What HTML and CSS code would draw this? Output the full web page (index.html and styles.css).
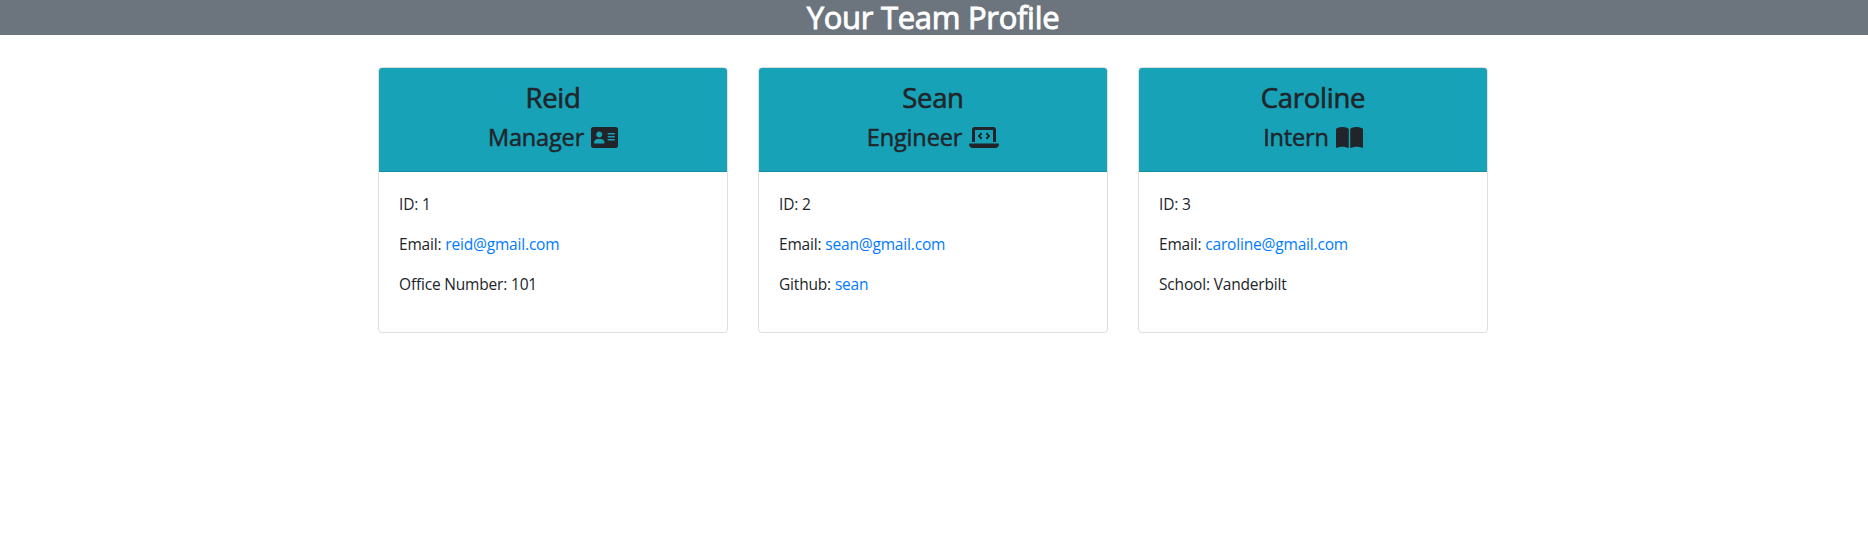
FILE: index.html
```html
<!DOCTYPE html>
<html lang="en">
<head>
<meta charset="utf-8">
<title>Your Team Profile</title>
<link rel="stylesheet" href="styles.css">
</head>
<body>
<header class="banner"><h1 class="banner-title">Your Team Profile</h1></header>
<main class="team">
  <section class="card">
    <div class="card-header">
      <h3 class="name name-short">Reid</h3>
      <h4 class="role"><span>Manager</span>
        <svg class="icon" viewBox="0 32 576 448"><path fill-rule="evenodd" d="M528 32H48C21.500 32 0 53.500 0 80v352c0 26.500 21.500 48 48 48h480c26.500 0 48-21.500 48-48V80c0-26.500-21.500-48-48-48zM176 128c35.350 0 64 28.650 64 64s-28.650 64-64 64s-64-28.650-64-64S140.700 128 176 128zM272 384h-192C71.160 384 64 376.800 64 368C64 323.800 99.820 288 144 288h64c44.180 0 80 35.820 80 80C288 376.800 280.800 384 272 384zM496 320h-128a16 16 0 0 1 0-32h128a16 16 0 0 1 0 32zM496 256h-128a16 16 0 0 1 0-32h128a16 16 0 0 1 0 32zM496 192h-128a16 16 0 0 1 0-32h128a16 16 0 0 1 0 32z"/></svg>
      </h4>
    </div>
    <div class="card-body">
      <p>ID: 1</p>
      <p>Email: <a href="mailto:reid@gmail.com">reid@gmail.com</a></p>
      <p>Office Number: 101</p>
    </div>
  </section>
  <section class="card">
    <div class="card-header">
      <h3 class="name name-short">Sean</h3>
      <h4 class="role"><span>Engineer</span>
        <svg class="icon icon-wide" viewBox="0 32 640 448"><path d="M128 96h384v256h64V80c0-26.400-21.600-48-48-48H112c-26.400 0-48 21.600-48 48v272h64V96zM624 384H16c-8.750 0-16 7.250-16 16c0 44.100 35.900 80 80 80h480c44.130 0 80-35.880 80-80C640 391.300 632.800 384 624 384zM365.900 286.200C369.800 290.100 374.900 292 380 292s10.230-1.938 14.140-5.844l48-48c7.812-7.813 7.812-20.500 0-28.310l-48-48c-7.812-7.813-20.470-7.813-28.280 0c-7.812 7.813-7.812 20.500 0 28.310l33.860 33.840l-33.860 33.840C358 265.700 358 278.400 365.900 286.200zM274.100 161.900c-7.812-7.813-20.470-7.813-28.280 0l-48 48c-7.812 7.813-7.812 20.500 0 28.310l48 48C249.800 290.100 254.900 292 260 292s10.230-1.938 14.140-5.844c7.812-7.813 7.812-20.500 0-28.310L240.300 224l33.860-33.840C281.900 182.400 281.900 169.700 274.100 161.900z"/></svg>
      </h4>
    </div>
    <div class="card-body">
      <p>ID: 2</p>
      <p>Email: <a href="mailto:sean@gmail.com">sean@gmail.com</a></p>
      <p>Github: <a href="https://github.com/sean">sean</a></p>
    </div>
  </section>
  <section class="card">
    <div class="card-header">
      <h3 class="name">Caroline</h3>
      <h4 class="role"><span>Intern</span>
        <svg class="icon" viewBox="0 32 576 448"><path d="M144.300 32C106.900 31.300 63.700 41.400 18.600 61.300C7.200 66.300 0 78 0 90.400V462c0 11.600 12 19.600 22.500 14.700c116-44 200-12 223.700 0C249.100 478.900 252.500 480 256 480c12.400 0 16-11.400 16-16V80c0-5.200-2.500-10-6.800-13C263.300 65.600 216.600 33.500 144.300 32zM431.700 32C469.100 31.300 512.300 41.400 557.400 61.300C568.800 66.300 576 78 576 90.400V462c0 11.600-12 19.600-22.500 14.700c-116-44-200-12-223.700 0C326.900 478.900 323.500 480 320 480c-12.400 0-16-11.400-16-16V80c0-5.200 2.500-10 6.800-13C312.700 65.600 359.400 33.500 431.700 32z"/></svg>
      </h4>
    </div>
    <div class="card-body">
      <p>ID: 3</p>
      <p>Email: <a href="mailto:caroline@gmail.com">caroline@gmail.com</a></p>
      <p>School: Vanderbilt</p>
    </div>
  </section>
</main>
</body>
</html>
```
FILE: styles.css
```css
* { box-sizing: border-box; }
body {
  margin: 0;
  background: #fff;
  color: #212529;
  font: 400 15.5px/24px "Open Sans", "Noto Sans", sans-serif;
  letter-spacing: -0.18px;
}
h1, h3, h4, p { margin: 0; }
a { color: #007bff; text-decoration: none; }
.banner { background: #6c757d; color: #fff; text-align: center; padding-right: 2px; }
.banner-title {
  font-size: 31px;
  font-weight: 500;
  line-height: 35px;
  letter-spacing: -0.3px;
  -webkit-text-stroke: 0.9px;
}
.team {
  display: grid;
  grid-template-columns: repeat(3, 350px);
  gap: 30px;
  width: 1110px;
  margin: 32px 0 0 378px;
}
.card { height: 266px; border: 1px solid #dfdfdf; border-radius: 4px; }
.card-header {
  height: 104px;
  padding: 13px 20px 11px;
  text-align: center;
  background: #17a2b8;
  border-bottom: 1px solid #148ea1;
  border-radius: 3px 3px 0 0;
}
.name {
  font-size: 27.5px;
  font-weight: 500;
  line-height: 34px;
  letter-spacing: -0.25px;
  margin-bottom: 8px;
  -webkit-text-stroke: 0.6px;
}
.name-short { letter-spacing: -0.35px; }
.role {
  display: flex;
  justify-content: center;
  align-items: center;
  gap: 7px;
  font-size: 23.5px;
  font-weight: 500;
  line-height: 29px;
  letter-spacing: -0.15px;
  -webkit-text-stroke: 0.5px;
}
.icon { width: 27px; height: 21px; margin-bottom: 1px; fill: #212529; -webkit-text-stroke: 0; }
.icon-wide { width: 30px; }
.card-body { padding: 20px; }
.card-body p { margin-bottom: 16px; }
```
